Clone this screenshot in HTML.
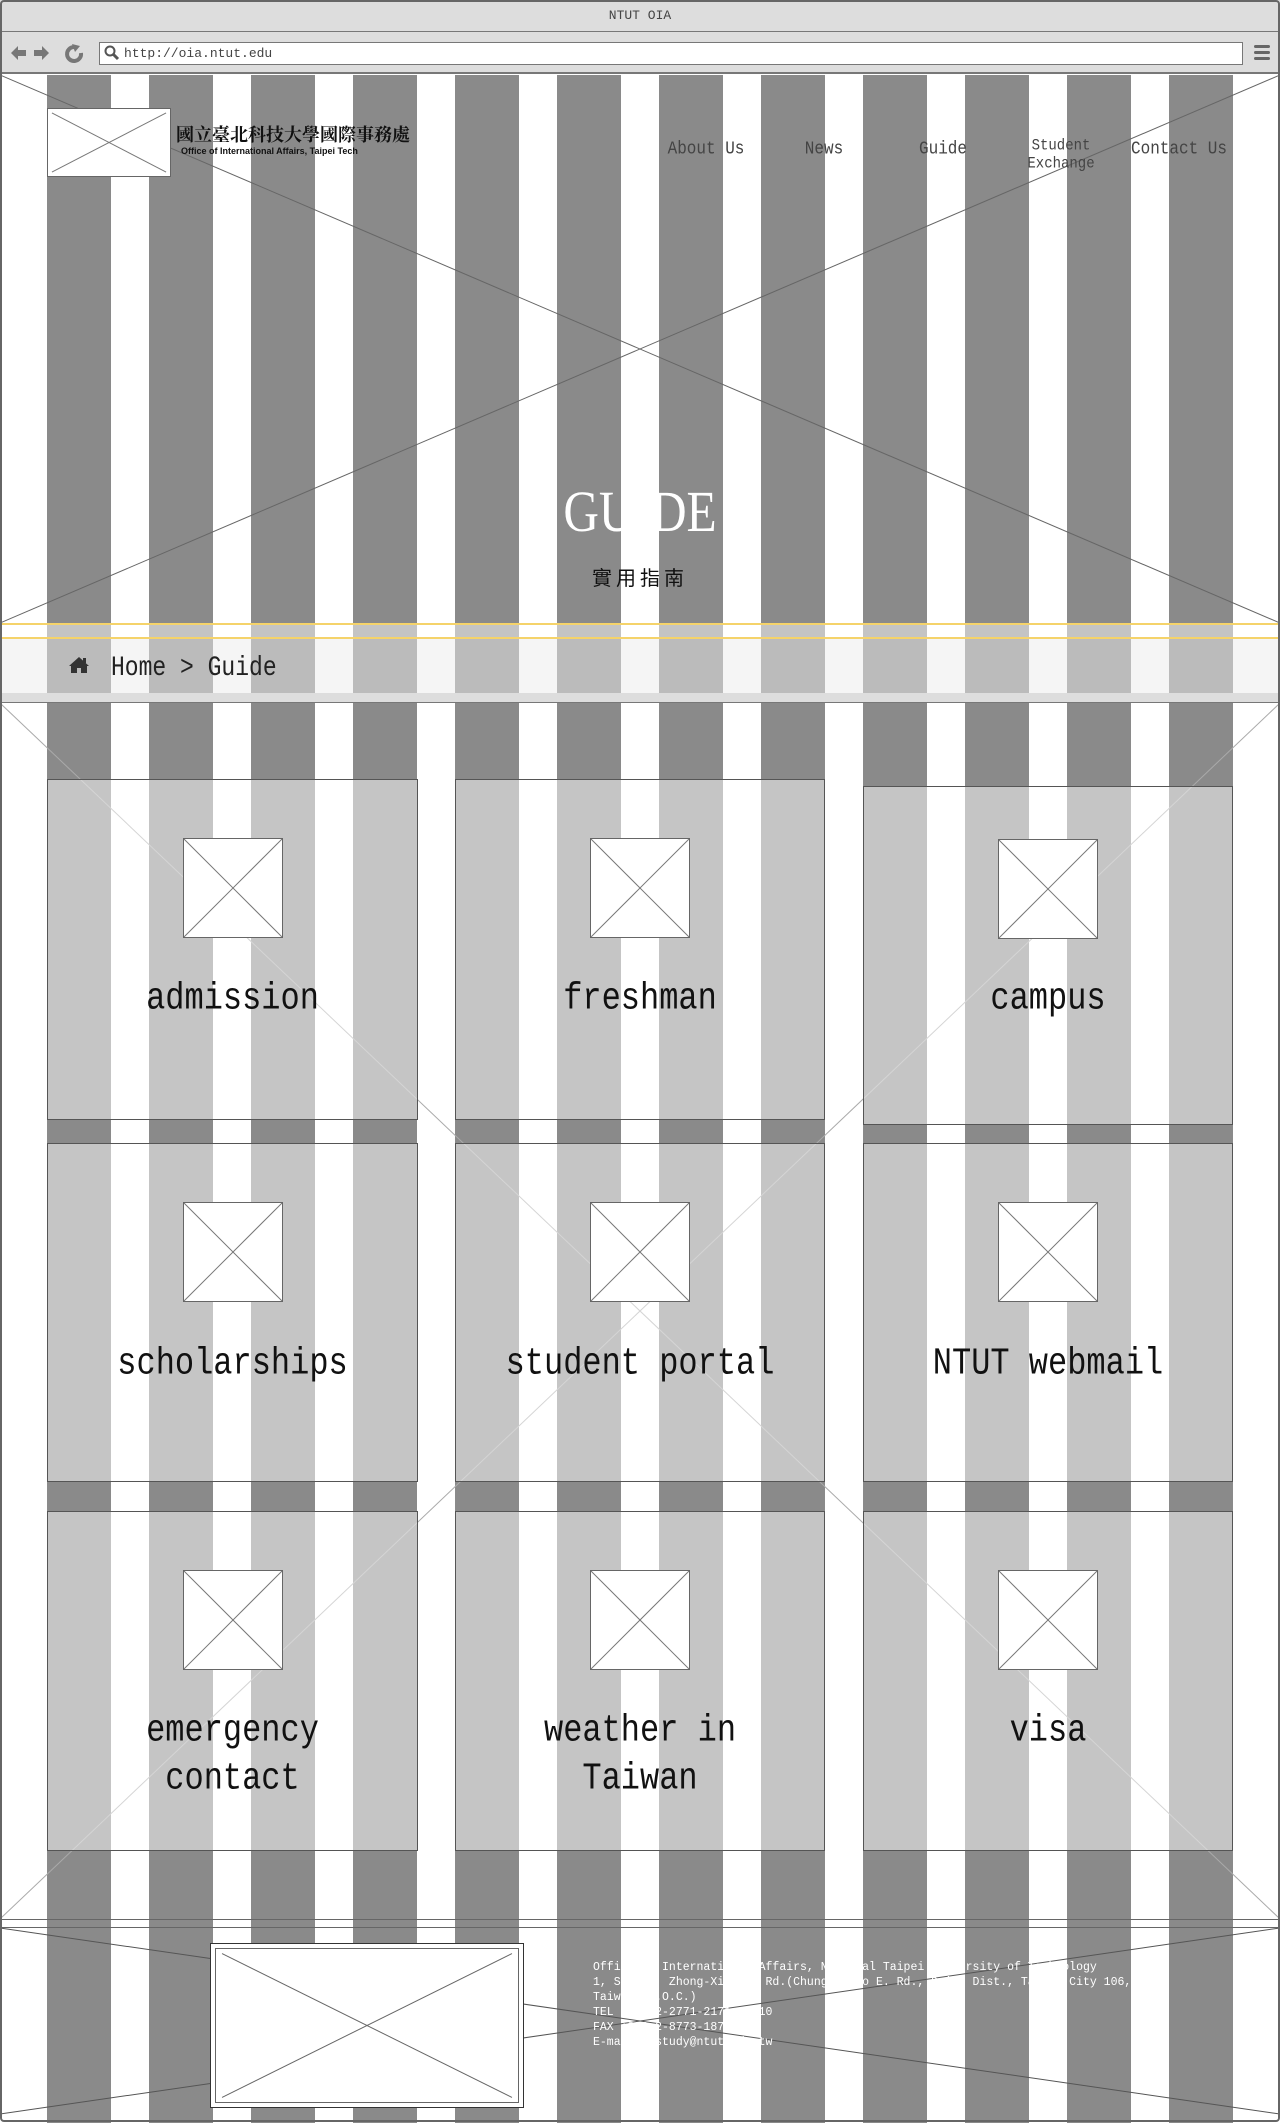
<!DOCTYPE html>
<html><head><meta charset="utf-8">
<style>
*{margin:0;padding:0;box-sizing:border-box}
body{width:1280px;height:2122px;position:relative;background:#fff;font-family:"Liberation Mono","Noto Sans CJK TC",monospace;overflow:hidden}
.abs{position:absolute}
.stripes{position:absolute;left:47px;width:1190px;background:repeating-linear-gradient(90deg,#8a8a8a 0 64px,transparent 64px 102px)}
.lstripes{position:absolute;left:47px;width:1190px;background:repeating-linear-gradient(90deg,#c4c4c4 0 64px,transparent 64px 102px)}
svg.x{position:absolute;left:0;top:0;width:100%;height:100%}
.card{position:absolute;border:1px solid #555;background:rgba(255,255,255,.5);text-align:center}
.card .ic{position:absolute;left:50%;margin-left:-50px;top:58px;width:100px;height:100px;background:#fff;border:1px solid #666}
.card .lb{position:absolute;left:0;right:0;font-size:32px;line-height:40px;color:#111;transform:scaleY(1.2);transform-origin:50% 0}
.nav{position:absolute;font-size:16px;color:#444;transform:translateX(-50%) scaleY(1.15);text-align:center;white-space:nowrap}
</style></head><body>
<div class="abs" style="left:0;top:0;width:1280px;height:2122px;border:2px solid #666;border-radius:4px;z-index:50;pointer-events:none"></div>
<div class="abs" style="left:0;top:0;width:1280px;height:32px;background:#ddd;border-bottom:1px solid #777;text-align:center;font-size:13px;line-height:32px;color:#444">NTUT OIA</div>
<div class="abs" style="left:0;top:32px;width:1280px;height:42px;background:#ddd;border-bottom:2px solid #777"></div>
<svg class="abs" style="left:8px;top:42px" width="80" height="22" viewBox="0 0 80 22">
<path d="M3 11 L10 4 L10 8 L18 8 L18 14 L10 14 L10 18 Z" fill="#777"/>
<path d="M41 11 L34 4 L34 8 L26 8 L26 14 L34 14 L34 18 Z" fill="#777"/>
<path d="M66 5 A7 7 0 1 0 73 11" stroke="#777" stroke-width="4" fill="none"/><path d="M64 2 L72 4 L67 10 Z" fill="#777"/>
</svg>
<div class="abs" style="left:99px;top:42px;width:1144px;height:23px;background:#fff;border:1px solid #777;font-size:13px;line-height:21px;padding-left:24px;color:#444">http://oia.ntut.edu</div>
<svg class="abs" style="left:104px;top:45px" width="16" height="16"><circle cx="6" cy="6" r="4.5" stroke="#555" stroke-width="2" fill="none"/><path d="M9 9 L14 14" stroke="#555" stroke-width="3"/></svg>
<div class="abs" style="left:1254px;top:45px;width:16px;height:3px;background:#666;border-radius:2px"></div>
<div class="abs" style="left:1254px;top:51px;width:16px;height:3px;background:#666;border-radius:2px"></div>
<div class="abs" style="left:1254px;top:57px;width:16px;height:3px;background:#666;border-radius:2px"></div>

<div class="abs" style="left:0;top:75px;width:1280px;height:548px;background:#fff">
<div class="stripes" style="top:0;height:548px"></div>
<svg class="x" viewBox="0 0 1280 548" preserveAspectRatio="none"><line x1="0" y1="0" x2="1280" y2="548" stroke="#666"/><line x1="1280" y1="0" x2="0" y2="548" stroke="#666"/></svg>
</div>
<div class="abs" style="left:47px;top:108px;width:124px;height:69px;background:#fff;border:1px solid #666">
<svg class="x" viewBox="0 0 124 69" preserveAspectRatio="none"><line x1="4" y1="4" x2="120" y2="65" stroke="#777"/><line x1="120" y1="4" x2="4" y2="65" stroke="#777"/></svg></div>
<div class="abs" style="left:176px;top:121px;font-size:18px;font-weight:bold;color:#111;font-family:'Noto Serif CJK SC','Noto Sans CJK TC',serif">國立臺北科技大學國際事務處</div>
<div class="abs" style="left:181px;top:146px;font-size:9px;font-weight:bold;color:#111;font-family:'Liberation Sans',sans-serif">Office of International Affairs, Taipei Tech</div>
<div class="nav" style="left:706px;top:140px">About Us</div>
<div class="nav" style="left:824px;top:140px">News</div>
<div class="nav" style="left:943px;top:140px">Guide</div>
<div class="nav" style="left:1061px;top:139px;font-size:14px;line-height:16px">Student<br>Exchange</div>
<div class="nav" style="left:1179px;top:140px">Contact Us</div>
<div class="abs" style="left:0;width:1280px;top:478px;text-align:center;font-size:58px;color:#fff;font-family:'Liberation Serif',serif;transform:scaleX(0.85)">GUIDE</div>
<div class="abs" style="left:0;width:1280px;top:562px;text-align:center;font-size:20px;color:#111;letter-spacing:4px;font-family:'Noto Sans CJK TC',sans-serif">實用指南</div>

<div class="abs" style="left:0;top:623px;width:1280px;height:16px;background:#fff;border-top:2px solid #f5d36a;border-bottom:2px solid #f5d36a"><div class="lstripes" style="top:0;height:12px"></div></div>
<div class="abs" style="left:0;top:639px;width:1280px;height:54px;background:#f5f5f5"><div class="stripes" style="top:0;height:54px;background:repeating-linear-gradient(90deg,#bbb 0 64px,transparent 64px 102px)"></div></div>
<svg class="abs" style="left:68px;top:656px" width="22" height="18" viewBox="0 0 22 18"><path d="M11 1 L1 10 L3 10 L3 17 L9 17 L9 12 L13 12 L13 17 L19 17 L19 10 L21 10 Z" fill="#333"/><rect x="15" y="2" width="3" height="5" fill="#333"/></svg>
<div class="abs" style="left:111px;top:652px;font-size:23px;color:#222;transform:scaleY(1.2);transform-origin:0 0">Home &gt; Guide</div>
<div class="abs" style="left:0;top:693px;width:1280px;height:10px;background:#ddd;border-bottom:1px solid #777"></div>

<div class="abs" style="left:0;top:703px;width:1280px;height:1216px;background:#fff">
<div class="stripes" style="top:0;height:1216px"></div>
<svg class="x" viewBox="0 0 1280 1216" preserveAspectRatio="none"><line x1="0" y1="0" x2="1280" y2="1216" stroke="#aaa"/><line x1="1280" y1="0" x2="0" y2="1216" stroke="#aaa"/></svg>
</div>

<div class="card" style="left:47px;top:779px;width:371px;height:341px"><div class="ic"><svg class="x" viewBox="0 0 100 100" preserveAspectRatio="none"><line x1="0" y1="0" x2="100" y2="100" stroke="#777"/><line x1="100" y1="0" x2="0" y2="100" stroke="#777"/></svg></div><div class="lb" style="top:195px">admission</div></div>
<div class="card" style="left:455px;top:779px;width:370px;height:341px"><div class="ic"><svg class="x" viewBox="0 0 100 100" preserveAspectRatio="none"><line x1="0" y1="0" x2="100" y2="100" stroke="#777"/><line x1="100" y1="0" x2="0" y2="100" stroke="#777"/></svg></div><div class="lb" style="top:195px">freshman</div></div>
<div class="card" style="left:863px;top:786px;width:370px;height:339px"><div class="ic" style="top:52px"><svg class="x" viewBox="0 0 100 100" preserveAspectRatio="none"><line x1="0" y1="0" x2="100" y2="100" stroke="#777"/><line x1="100" y1="0" x2="0" y2="100" stroke="#777"/></svg></div><div class="lb" style="top:188px">campus</div></div>

<div class="card" style="left:47px;top:1143px;width:371px;height:339px"><div class="ic"><svg class="x" viewBox="0 0 100 100" preserveAspectRatio="none"><line x1="0" y1="0" x2="100" y2="100" stroke="#777"/><line x1="100" y1="0" x2="0" y2="100" stroke="#777"/></svg></div><div class="lb" style="top:196px">scholarships</div></div>
<div class="card" style="left:455px;top:1143px;width:370px;height:339px"><div class="ic"><svg class="x" viewBox="0 0 100 100" preserveAspectRatio="none"><line x1="0" y1="0" x2="100" y2="100" stroke="#777"/><line x1="100" y1="0" x2="0" y2="100" stroke="#777"/></svg></div><div class="lb" style="top:196px">student portal</div></div>
<div class="card" style="left:863px;top:1143px;width:370px;height:339px"><div class="ic"><svg class="x" viewBox="0 0 100 100" preserveAspectRatio="none"><line x1="0" y1="0" x2="100" y2="100" stroke="#777"/><line x1="100" y1="0" x2="0" y2="100" stroke="#777"/></svg></div><div class="lb" style="top:196px">NTUT webmail</div></div>

<div class="card" style="left:47px;top:1511px;width:371px;height:340px"><div class="ic"><svg class="x" viewBox="0 0 100 100" preserveAspectRatio="none"><line x1="0" y1="0" x2="100" y2="100" stroke="#777"/><line x1="100" y1="0" x2="0" y2="100" stroke="#777"/></svg></div><div class="lb" style="top:195px">emergency<br>contact</div></div>
<div class="card" style="left:455px;top:1511px;width:370px;height:340px"><div class="ic"><svg class="x" viewBox="0 0 100 100" preserveAspectRatio="none"><line x1="0" y1="0" x2="100" y2="100" stroke="#777"/><line x1="100" y1="0" x2="0" y2="100" stroke="#777"/></svg></div><div class="lb" style="top:195px">weather in<br>Taiwan</div></div>
<div class="card" style="left:863px;top:1511px;width:370px;height:340px"><div class="ic"><svg class="x" viewBox="0 0 100 100" preserveAspectRatio="none"><line x1="0" y1="0" x2="100" y2="100" stroke="#777"/><line x1="100" y1="0" x2="0" y2="100" stroke="#777"/></svg></div><div class="lb" style="top:195px">visa</div></div>

<div class="abs" style="left:0;top:1919px;width:1280px;height:203px;background:#fff;border-top:1px solid #666">
<div class="stripes" style="top:0;height:203px"></div>
<div class="abs" style="left:0;top:7px;width:1280px;height:1px;background:#666"></div>
<svg class="x" viewBox="0 0 1280 203" preserveAspectRatio="none"><line x1="0" y1="8" x2="1280" y2="195" stroke="#555"/><line x1="1280" y1="8" x2="0" y2="195" stroke="#555"/></svg>
</div>
<div class="abs" style="left:210px;top:1943px;width:314px;height:165px;background:#fff;border:1px solid #333;padding:4px">
<div style="position:relative;width:100%;height:100%;border:1px solid #666"><svg class="x" viewBox="0 0 100 100" preserveAspectRatio="none"><line x1="2" y1="3" x2="98" y2="97" stroke="#666" vector-effect="non-scaling-stroke"/><line x1="98" y1="3" x2="2" y2="97" stroke="#666" vector-effect="non-scaling-stroke"/></svg></div></div>
<div class="abs" style="left:593px;top:1960px;font-size:11.5px;line-height:15px;color:#fff;white-space:pre">Office of International Affairs, National Taipei University of Technology
1, Sec. 3, Zhong-Xiao E. Rd.(Chung-Hsiao E. Rd., Da'an Dist., Taipei City 106,
Taiwan (R.O.C.)
TEL +886-2-2771-2171 #1110
FAX +886-2-8773-1879
E-mail:ntstudy@ntut.edu.tw</div>
</body></html>
